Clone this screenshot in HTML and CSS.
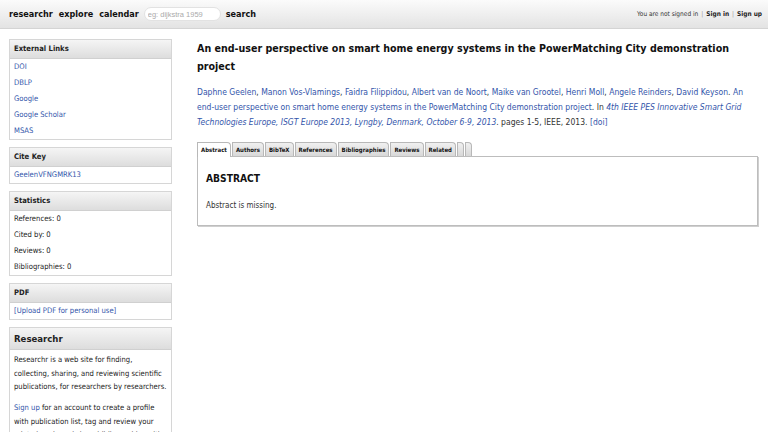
FILE: index.html
```html
<!DOCTYPE html>
<html>
<head>
<meta charset="utf-8">
<title>researchr</title>
<link rel="stylesheet" href="styles.css">
</head>
<body>
<div class="topbar">
  <div class="nav">
    <a class="brand" href="#">researchr</a>
    <a class="navlink" href="#">explore</a>
    <a class="navlink" href="#">calendar</a>
    <input class="search" type="text" placeholder="eg: dijkstra 1959">
    <a class="navlink" href="#">search</a>
  </div>
  <div class="account">
    <span>You are not signed in</span>
    <span class="sep">|</span>
    <a href="#">Sign in</a>
    <span class="sep">|</span>
    <a href="#">Sign up</a>
  </div>
</div>
<div class="page">
  <div class="sidebar">
    <div class="box">
      <div class="boxhead">External Links</div>
      <div class="boxbody">
        <a class="item" href="#">DOI</a>
        <a class="item" href="#">DBLP</a>
        <a class="item" href="#">Google</a>
        <a class="item" href="#">Google Scholar</a>
        <a class="item" href="#">MSAS</a>
      </div>
    </div>
    <div class="box">
      <div class="boxhead">Cite Key</div>
      <div class="boxbody">
        <a class="item" href="#">GeelenVFNGMRK13</a>
      </div>
    </div>
    <div class="box">
      <div class="boxhead">Statistics</div>
      <div class="boxbody">
        <div class="item">References: 0</div>
        <div class="item">Cited by: 0</div>
        <div class="item">Reviews: 0</div>
        <div class="item">Bibliographies: 0</div>
      </div>
    </div>
    <div class="box">
      <div class="boxhead">PDF</div>
      <div class="boxbody">
        <a class="item" href="#">[Upload PDF for personal use]</a>
      </div>
    </div>
    <div class="box">
      <div class="boxhead big">Researchr</div>
      <div class="boxbody text">
        <p>Researchr is a web site for finding, collecting, sharing, and reviewing scientific publications, for researchers by researchers.</p>
        <p><a href="#">Sign up</a> for an account to create a profile with publication list, tag and review your related work, and share bibliographies with your co-authors.</p>
      </div>
    </div>
  </div>
  <div class="main">
    <h1 class="title">An end-user perspective on smart home energy systems in the PowerMatching City demonstration project</h1>
    <p class="cite"><a href="#">Daphne Geelen</a>, <a href="#">Manon Vos-Vlamings</a>, <a href="#">Faidra Filippidou</a>, <a href="#">Albert van de Noort</a>, <a href="#">Maike van Grootel</a>, <a href="#">Henri Moll</a>, <a href="#">Angele Reinders</a>, <a href="#">David Keyson</a>. <a href="#">An end-user perspective on smart home energy systems in the PowerMatching City demonstration project</a>. In <a href="#"><i>4th IEEE PES Innovative Smart Grid Technologies Europe, ISGT Europe 2013, Lyngby, Denmark, October 6-9, 2013</i></a>. pages 1-5, IEEE, 2013. <a href="#">[doi]</a></p>
    <div class="tabs">
      <span class="tab active">Abstract</span>
      <span class="tab">Authors</span>
      <span class="tab">BibTeX</span>
      <span class="tab">References</span>
      <span class="tab">Bibliographies</span>
      <span class="tab">Reviews</span>
      <span class="tab">Related</span>
      <span class="tab empty"></span>
      <span class="tab empty"></span>
    </div>
    <div class="panel">
      <h2 class="panelhead">ABSTRACT</h2>
      <p class="paneltext">Abstract is missing.</p>
    </div>
  </div>
</div>
</body>
</html>
```

FILE: styles.css
```css
html, body {
  margin: 0;
  padding: 0;
  background: #ffffff;
}
body {
  font-family: "DejaVu Sans Condensed", "DejaVu Sans", Verdana, sans-serif;
  font-size: 7.6px;
  color: #222;
}
a {
  color: #3355aa;
  text-decoration: none;
}
.topbar {
  height: 28px;
  border-bottom: 1px solid #d4d4d4;
  background: linear-gradient(#fbfbfb, #e3e3e3);
  display: flex;
  align-items: center;
  justify-content: space-between;
  padding: 0 6px 0 9px;
}
.nav {
  display: flex;
  align-items: center;
  gap: 6px;
}
.nav a {
  color: #111;
  font-weight: bold;
  font-size: 9px;
}
.search {
  width: 69px;
  height: 12px;
  border: 1px solid #e2e2e2;
  border-radius: 7px;
  background: #fff;
  padding: 0 3px;
  margin: 0 -1px;
  font-family: "Liberation Sans", Arial, sans-serif;
  font-size: 7.5px;
  color: #999;
  outline: none;
}
.search::placeholder {
  color: #aaa;
}
.account {
  display: flex;
  align-items: center;
  gap: 3px;
  font-size: 6.5px;
  color: #333;
}
.account a {
  color: #222;
  font-weight: bold;
}
.account .sep {
  color: #999;
}
.page {
  display: flex;
  align-items: flex-start;
  padding: 10px 10px 0 9px;
  gap: 25px;
}
.sidebar {
  width: 163px;
  flex: none;
  display: flex;
  flex-direction: column;
  gap: 7px;
}
.box {
  border: 1px solid #d6d6d6;
  background: #fff;
}
.boxhead {
  height: 18px;
  line-height: 18px;
  padding: 0 4px;
  font-weight: bold;
  color: #222;
  background: linear-gradient(#f5f5f5, #dddddd);
  border-bottom: 1px solid #d0d0d0;
}
.boxhead.big {
  height: 21px;
  line-height: 21px;
  font-size: 9.5px;
}
.boxbody {
  padding: 0 4px 0;
}
.item {
  display: block;
  line-height: 16px;
}
.boxbody.text {
  padding: 3px 2px 0 4px;
  line-height: 13.5px;
}
.boxbody.text p {
  margin: 0 0 7.5px;
}
.main {
  flex: 1;
  min-width: 0;
}
.title {
  margin: 0;
  padding-top: 0;
  font-size: 10.6px;
  line-height: 18px;
  font-weight: bold;
  color: #111;
}
.cite {
  margin: 10px 0 0;
  line-height: 15px;
  font-size: 8.5px;
  color: #333;
}
.tabs {
  margin-top: 12px;
  display: flex;
  align-items: flex-end;
  height: 14px;
}
.tab {
  display: block;
  height: 13px;
  line-height: 13px;
  padding: 0 3px;
  margin-right: 1px;
  border: 1px solid #b8b8b8;
  border-bottom: none;
  border-radius: 0 4px 0 0;
  background: linear-gradient(#f0f0f0, #d8d8d8);
  font-weight: bold;
  font-size: 6px;
  color: #111;
}
.tab.active {
  background: #fff;
  height: 14px;
  position: relative;
  top: 1px;
}
.tab.empty {
  width: 1px;
  padding: 0 2px;
}
.panel {
  border: 1px solid #bdbdbd;
  box-shadow: 1px 1px 0 #cfcfcf;
  height: 68px;
  padding: 0 8px;
}
.panelhead {
  margin: 15px 0 0;
  font-size: 10.2px;
  font-weight: bold;
  color: #111;
  line-height: 14px;
}
.paneltext {
  margin: 15px 0 0;
  font-size: 8px;
  color: #333;
}
```
